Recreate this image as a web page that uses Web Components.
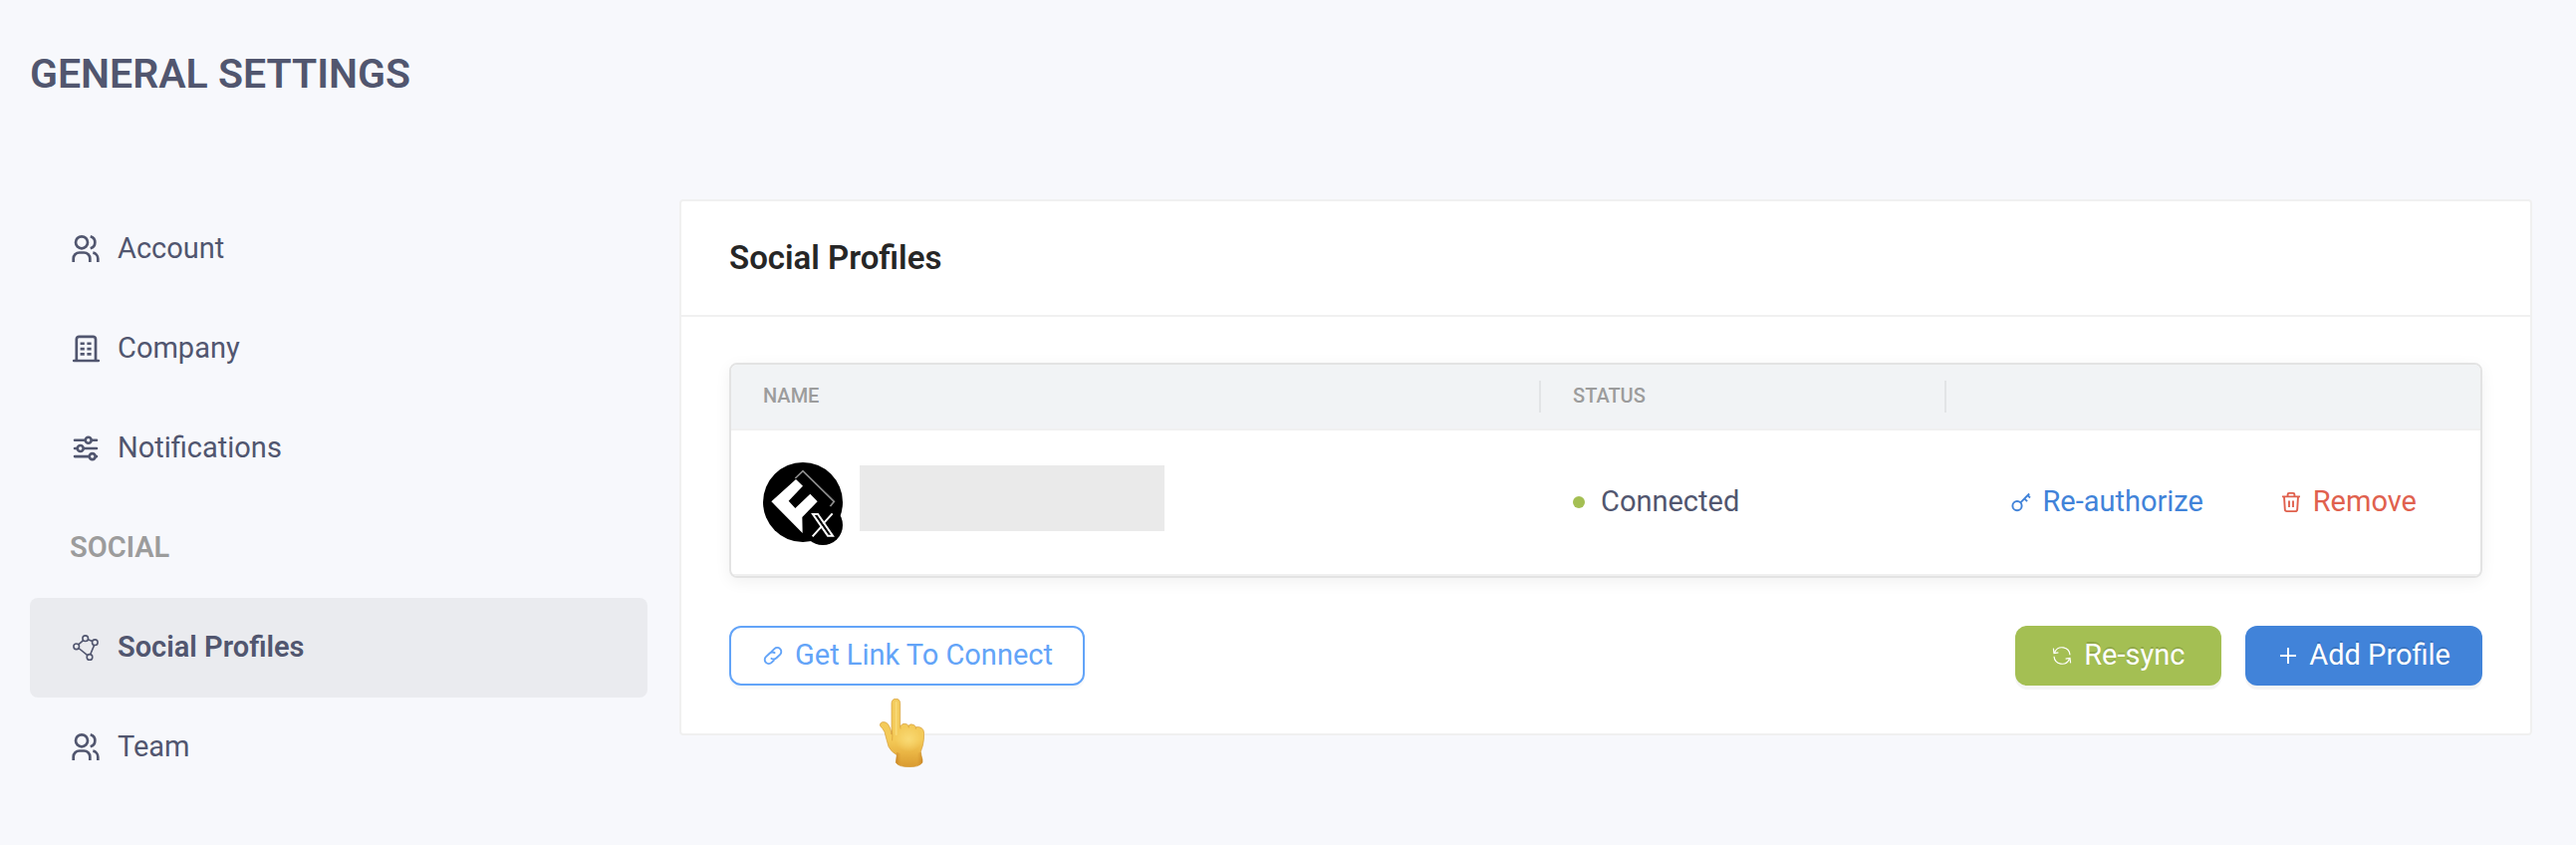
<!DOCTYPE html>
<html lang="en">
<head>
<meta charset="utf-8">
<meta name="viewport" content="width=device-width, initial-scale=1">
<title>General Settings</title>
<style>
  body {
    margin: 0;
    min-height: 100vh;
    background: #f7f8fc;
    color: #51566f;
    font: 400 29px/44px Roboto, "Liberation Sans", sans-serif;
  }
</style>
</head>
<body>
<settings-page>
  <span slot="title">GENERAL SETTINGS</span>
  <settings-nav slot="nav">
    <nav-item icon="users">Account</nav-item>
    <nav-item icon="building">Company</nav-item>
    <nav-item icon="sliders">Notifications</nav-item>
    <nav-heading>SOCIAL</nav-heading>
    <nav-item icon="network" active>Social Profiles</nav-item>
    <nav-item icon="users">Team</nav-item>
  </settings-nav>
  <settings-card>
    <span slot="title">Social Profiles</span>
    <profile-table></profile-table>
    <pointer-hint slot="start"><ui-button icon="link" kind="outline">Get Link To Connect</ui-button></pointer-hint>
    <ui-button slot="end" icon="sync" kind="success">Re-sync</ui-button>
    <ui-button slot="end" icon="plus" kind="primary">Add Profile</ui-button>
  </settings-card>
</settings-page>

<script>
const define = (name, render) => customElements.define(name, class extends HTMLElement {
  connectedCallback() {
    if (this.shadowRoot) return;
    this.attachShadow({ mode: 'open' }).innerHTML = render(this);
  }
});

const ICONS = {
  users: [30, 2.7, '<circle cx="12" cy="8.3" r="6"/><path d="M20.7 2.3a6.2 6.2 0 0 1 0 12M3.7 28v-3.5a6 6 0 0 1 6-6h4.6a6 6 0 0 1 6 6v3.5M23.3 18.7a6 6 0 0 1 5 6v3.3"/>'],
  building: [30, 2.7, '<path d="M6.8 27V5.4a2.6 2.6 0 0 1 2.6-2.6h14a2.6 2.6 0 0 1 2.6 2.6V27"/><path stroke-linecap="round" d="M4.2 27h24.6"/><path stroke-width="2.6" d="M10.6 9.8h4.2M17.4 9.8h4.2M10.6 15.1h4.2M17.4 15.1h4.2M10.6 20.4h4.2M17.4 20.4h4.2"/>'],
  sliders: [30, 2.6, '<path stroke-linecap="round" d="M5 6.8h10.5M22 6.8h5M5 15h2.5M14 15h13M5 23.1h14.5M26 23.1h1"/><circle cx="18.7" cy="6.8" r="3"/><circle cx="10.7" cy="15" r="3"/><circle cx="22.7" cy="23.1" r="3"/>'],
  network: [30, 1.6, '<circle cx="15.7" cy="5.7" r="2.8"/><circle cx="25.3" cy="9.7" r="2.8"/><circle cx="6.7" cy="13.8" r="2.8"/><circle cx="20" cy="24.4" r="2.8"/><path d="M8.7 11.8l4.9-4.2M18.3 6.8l4.4 1.8M24.6 12.4l-3.9 9.3M9 15.5l8.8 7.1"/>'],
  link: [20, 1.9, '<path d="M8.3 6.2l3.1-3.1a4 4 0 0 1 5.7 5.7l-3.6 3.5a4 4 0 0 1-5.7 0M11.7 13.8l-3.1 3.1a4 4 0 0 1-5.7-5.7l3.6-3.5a4 4 0 0 1 5.7 0"/>'],
  sync: [20, 1.2, '<path d="M2.7 6.6A8 8 0 0 1 18 9.2M17.3 13.4A8 8 0 0 1 2 10.8M1.4 2.6l.6 4.9 4.4-.6M18.6 17.4l-.6-4.9-4.4.6"/>'],
  plus: [20, 2, '<path d="M11 2v16M3 10h16"/>'],
  key: [20, 1.9, '<circle cx="7" cy="13.6" r="4.6"/><path d="M10.4 10.3l8.8-8.8M14.3 6.4l2.8 2.8M17.6 3.1l2.4 2.4"/>'],
  trash: [20, 1.9, '<path d="M1 4.4h18M6.6 4.2V2.3a1.4 1.4 0 0 1 1.4-1.4h4a1.4 1.4 0 0 1 1.4 1.4v1.9M3 4.4l.8 12.8a2 2 0 0 0 2 1.9h8.4a2 2 0 0 0 2-1.9L17 4.4M8 8.4v6.6M12 8.4v6.6"/>']
};

define('ui-icon', el => {
  const [size, stroke, art] = ICONS[el.getAttribute('name')];
  return `
  <style>
    :host { display: block; flex: none; width: ${size}px; height: ${size}px; }
    svg { display: block; fill: none; stroke: currentColor; overflow: visible; }
  </style>
  <svg width="${size}" height="${size}" viewBox="0 0 ${size} ${size}" stroke-width="${stroke}" aria-hidden="true">${art}</svg>`;
});

define('settings-page', () => `
  <style>
    :host { display: block; padding: 44px 44px 44px 30px; }
    h1 { margin: 0 0 96px; font-size: 41px; line-height: 60px; font-weight: 600; }
    .columns { display: grid; grid-template-columns: 1fr 3fr; gap: 32px; align-items: start; }
  </style>
  <h1><slot name="title"></slot></h1>
  <div class="columns"><slot name="nav"></slot><main><slot></slot></main></div>`);

define('settings-nav', () => `
  <style>
    :host { display: block; }
    nav { display: flex; flex-direction: column; }
  </style>
  <nav aria-label="Settings"><slot></slot></nav>`);

define('nav-item', el => `
  <style>
    :host { display: block; }
    a { display: flex; align-items: center; gap: 18px; height: 100px; padding: 0 40px; border-radius: 8px; color: inherit; text-decoration: none; }
    span { padding-bottom: 2px; }
    :host([active]) a { background: #eaebef; font-weight: 600; }
  </style>
  <a href="#"${el.hasAttribute('active') ? ' aria-current="page"' : ''}><ui-icon name="${el.getAttribute('icon')}"></ui-icon><span><slot></slot></span></a>`);

define('nav-heading', () => `
  <style>
    :host { display: block; padding: 27px 40px 29px; color: #9c9c9c; font-weight: 600; }
  </style>
  <slot></slot>`);

define('settings-card', () => `
  <style>
    :host { display: block; background: #fff; border: 2px solid #f0f0f0; border-radius: 4px; }
    header { padding: 35px 48px; border-bottom: 2px solid #f0f0f0; }
    h2 { margin: 0; font-size: 33px; line-height: 44px; font-weight: 600; color: #262626; }
    .body { padding: 46px 48px 48px; }
    footer, .end { display: flex; align-items: center; gap: 24px; }
    footer { justify-content: space-between; margin-top: 48px; }
  </style>
  <header><h2><slot name="title"></slot></h2></header>
  <div class="body">
    <slot></slot>
    <footer><slot name="start"></slot><div class="end"><slot name="end"></slot></div></footer>
  </div>`);

define('ui-button', el => `
  <style>
    :host { display: block; }
    button {
      display: flex; align-items: center; justify-content: center; gap: 12px;
      box-sizing: border-box; height: 60px; padding: 0 32px;
      border: 0; border-radius: 12px; background: none; color: inherit; font: inherit; white-space: nowrap; cursor: pointer;
    }
    span { padding-bottom: 2px; }
    :host([kind="outline"]) button { padding: 0 30px 0 32px; border: 2px solid #63a4f8; background: #fff; color: #63a4f8; box-shadow: 0 4px 0 rgba(0,0,0,.02); }
    :host([kind="success"]) button { min-width: 207px; background: #a4bf53; }
    :host([kind="primary"]) button { background: #4183d9; }
    :host([kind="success"]) button, :host([kind="primary"]) button { color: #fff; text-shadow: 0 -2px 0 rgba(0,0,0,.12); box-shadow: 0 4px 0 rgba(0,0,0,.04); }
    :host([kind="link"]) button { color: #4183d9; }
    :host([kind="danger"]) button { color: #e0614e; }
  </style>
  <button type="button"><ui-icon name="${el.getAttribute('icon')}"></ui-icon><span><slot></slot></span></button>`);

define('pointer-hint', () => `
  <style>
    :host { display: block; position: relative; }
    svg { position: absolute; left: 151px; top: calc(100% + 13px); pointer-events: none; }
  </style>
  <slot></slot>
  <svg width="45" height="69" viewBox="0 0 135 207" aria-hidden="true">
    <defs>
      <linearGradient id="skin" x1="0" y1="0" x2="0" y2="1"><stop offset="0" stop-color="#f3cc5e"/><stop offset=".6" stop-color="#f4ca58"/><stop offset=".8" stop-color="#e9b443"/><stop offset="1" stop-color="#d99a30"/></linearGradient>
      <linearGradient id="shade" x1="0" y1="0" x2="1" y2="0"><stop offset="0" stop-color="#b86a15" stop-opacity=".55"/><stop offset=".2" stop-color="#d08a22" stop-opacity="0"/><stop offset=".8" stop-color="#d08a22" stop-opacity="0"/><stop offset="1" stop-color="#b86a15" stop-opacity=".5"/></linearGradient>
      <radialGradient id="palm"><stop offset="0" stop-color="#f9da75"/><stop offset="1" stop-color="#f9da75" stop-opacity="0"/></radialGradient>
    </defs>
    <path fill="url(#skin)" stroke="#d39a35" stroke-width="2" d="M36 108V14Q37 1 49 1T62 14V84Q68 74 77 76 84 77 87 82 93 75 102 79 107 81 109 86 119 84 127 89 134 94 134 106 134 126 130 142 126 154 124 160 125 170 129 184V193Q118 207 88 206 58 206 49 193L52 170Q36 162 27 145 21 124 15 101 10 90 2 83-1 74 8 71 22 69 29 83 34 92 36 108Z"/>
    <path fill="url(#shade)" d="M52 162Q88 176 124 161 125 172 129 184V193Q118 207 88 206 58 206 49 193Z"/>
    <ellipse cx="87" cy="122" rx="40" ry="38" fill="url(#palm)"/>
    <path fill="none" stroke="#f8d976" stroke-width="6" stroke-linecap="round" d="M50 12v96"/>
    <path fill="none" stroke="#d79b34" stroke-width="2" stroke-linecap="round" d="M37 96q3 16 1 30M62 84l1 6M87 83l1 4M109 87v4"/>
  </svg>`);

define('profile-avatar', () => `
  <style>
    :host { display: block; flex: none; width: 80px; height: 80px; }
    svg { display: block; overflow: visible; }
  </style>
  <svg width="80" height="80" viewBox="0 0 240 240" role="img" aria-label="X profile">
    <circle cx="120" cy="120" r="120"/>
    <path fill="#fff" d="M25 118L99 51l21 20-43 45 20 22 45-43 22 23-46 47 1 48z"/>
    <path fill="none" stroke="#8c8c8c" stroke-width="5" d="M97 48l23-22 94 92-12 15"/>
    <circle cx="180" cy="189" r="60"/>
    <path fill="none" stroke="#fff" stroke-width="6" d="M150 156h15l45 65h-15zM209 154l-28 31M149 223l29-32"/>
  </svg>`);

define('profile-table', () => `
  <style>
    :host { display: block; border: 2px solid #e3e3e3; border-radius: 8px; overflow: hidden; box-shadow: 0 4px 16px rgba(0,0,0,.06); }
    table { width: 100%; table-layout: fixed; border-collapse: separate; border-spacing: 0; }
    .name { width: 46.3%; }
    .status { width: 23.2%; }
    th, td { box-sizing: border-box; padding: 0 32px; border-bottom: 2px solid #f0f0f0; text-align: left; }
    th { height: 66px; padding-bottom: 2px; background: #f1f3f5; color: #9c9c9c; font-size: 20px; line-height: 24px; font-weight: 500; }
    th:not(:last-child) { background-image: linear-gradient(#e2e4e6, #e2e4e6); background-size: 2px 32px; background-position: right center; background-repeat: no-repeat; }
    td { height: 146px; }
    .profile, .state, .actions { display: flex; align-items: center; }
    .profile { gap: 17px; }
    .hidden-name { width: 306px; height: 66px; margin-bottom: 8px; background: #eaeaea; }
    .state { gap: 16px; }
    .state span:last-child { padding-bottom: 2px; }
    .dot { width: 12px; height: 12px; border-radius: 50%; background: #a4bf53; }
    .actions { justify-content: space-between; }
  </style>
  <table>
    <colgroup><col class="name"><col class="status"><col></colgroup>
    <thead><tr><th scope="col">NAME</th><th scope="col">STATUS</th><th></th></tr></thead>
    <tbody><tr>
      <td><div class="profile"><profile-avatar></profile-avatar><div class="hidden-name"></div></div></td>
      <td><div class="state"><span class="dot"></span><span>Connected</span></div></td>
      <td><div class="actions"><ui-button icon="key" kind="link">Re-authorize</ui-button><ui-button icon="trash" kind="danger">Remove</ui-button></div></td>
    </tr></tbody>
  </table>`);
</script>
</body>
</html>
